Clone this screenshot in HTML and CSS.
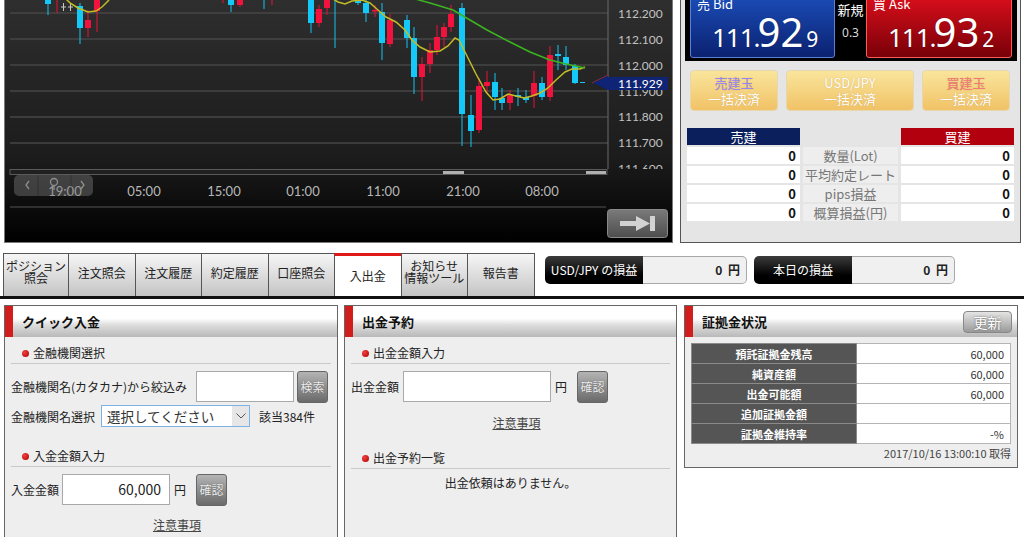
FILE: index.html
```html
<!DOCTYPE html>
<html lang="ja">
<head>
<meta charset="utf-8">
<title>入出金</title>
<link rel="stylesheet" href="styles.css">
</head>
<body>
<div class="top">
  <div class="chart">
    <svg width="667" height="242" viewBox="5 0 667 242" xmlns="http://www.w3.org/2000/svg">
      <defs>
        <linearGradient id="bg" x1="0" y1="0" x2="0" y2="1">
          <stop offset="0" stop-color="#2e2e2e"/>
          <stop offset="0.65" stop-color="#1c1c1c"/>
          <stop offset="1" stop-color="#000"/>
        </linearGradient>
        <linearGradient id="btn" x1="0" y1="0" x2="0" y2="1">
          <stop offset="0" stop-color="#7a7a7a"/>
          <stop offset="1" stop-color="#4e4e4e"/>
        </linearGradient>
        <clipPath id="axclip"><rect x="600" y="0" width="80" height="169"/></clipPath>
      </defs>
      <rect x="5" y="0" width="667" height="242" fill="url(#bg)"/>
      <g class="grid">
        <line x1="10" y1="13" x2="608" y2="13"/>
        <line x1="10" y1="39" x2="608" y2="39"/>
        <line x1="10" y1="65" x2="608" y2="65"/>
        <line x1="10" y1="91" x2="608" y2="91"/>
        <line x1="10" y1="117" x2="608" y2="117"/>
        <line x1="10" y1="143" x2="608" y2="143"/>
      </g>
      <line class="axis" x1="608" y1="0" x2="608" y2="169"/>
      <g class="axlbl" clip-path="url(#axclip)">
        <text x="618" y="18">112.200</text>
        <text x="618" y="44">112.100</text>
        <text x="618" y="70">112.000</text>
        <text x="618" y="96">111.900</text>
        <text x="618" y="121">111.800</text>
        <text x="618" y="147">111.700</text>
        <text x="618" y="173">111.600</text>
      </g>
      <g class="cc">
        <line x1="48" y1="-5" x2="48" y2="15"/><rect x="45" y="-5" width="6" height="9"/>
        <line x1="80" y1="3" x2="80" y2="44"/><rect x="77" y="6" width="6" height="22"/>
        <line x1="231" y1="-5" x2="231" y2="12"/><rect x="228" y="-5" width="6" height="10"/>
        <line x1="264" y1="-5" x2="264" y2="9"/>
        <line x1="311" y1="-5" x2="311" y2="33"/><rect x="308" y="-5" width="6" height="28"/>
        <line x1="335" y1="-5" x2="335" y2="48"/>
        <line x1="358" y1="-5" x2="358" y2="5"/><rect x="355" y="-5" width="6" height="8"/>
        <line x1="366" y1="-5" x2="366" y2="22"/><rect x="363" y="3" width="6" height="10"/>
        <line x1="382" y1="3" x2="382" y2="60"/><rect x="379" y="12" width="6" height="31"/>
        <line x1="407" y1="15" x2="407" y2="48"/><rect x="404" y="20" width="6" height="18"/>
        <line x1="414" y1="27" x2="414" y2="94"/><rect x="411" y="38" width="6" height="39"/>
        <line x1="462" y1="3" x2="462" y2="146"/><rect x="459" y="8" width="6" height="106"/>
        <line x1="471" y1="95" x2="471" y2="147"/><rect x="468" y="115" width="6" height="16"/>
        <line x1="495" y1="73" x2="495" y2="110"/><rect x="492" y="82" width="6" height="15"/>
        <line x1="502" y1="88" x2="502" y2="110"/><rect x="499" y="98" width="6" height="5"/>
        <line x1="518" y1="88" x2="518" y2="106"/><rect x="515" y="95" width="6" height="2"/>
        <line x1="526" y1="90" x2="526" y2="103"/><rect x="523" y="97" width="6" height="3"/>
        <line x1="542" y1="77" x2="542" y2="100"/><rect x="539" y="83" width="6" height="14"/>
        <line x1="558" y1="45" x2="558" y2="70"/><rect x="555" y="54" width="6" height="2"/>
        <line x1="566" y1="46" x2="566" y2="70"/><rect x="563" y="57" width="6" height="8"/>
        <line x1="575" y1="64" x2="575" y2="84"/><rect x="572" y="66" width="6" height="17"/>
        <line x1="580" y1="82.5" x2="585" y2="82.5"/>
      </g>
      <g class="cr">
        <line x1="57" y1="-5" x2="57" y2="13"/><rect x="54" y="-5" width="6" height="5"/>
        <line x1="88" y1="10" x2="88" y2="37"/><rect x="85" y="20" width="6" height="8"/>
        <line x1="97" y1="-5" x2="97" y2="32"/><rect x="94" y="-5" width="6" height="16"/>
        <line x1="223" y1="-5" x2="223" y2="3"/>
        <line x1="240" y1="-5" x2="240" y2="7"/><rect x="237" y="-5" width="6" height="10"/>
        <line x1="272" y1="-5" x2="272" y2="5"/>
        <line x1="319" y1="5" x2="319" y2="27"/><rect x="316" y="9" width="6" height="14"/>
        <line x1="327" y1="-5" x2="327" y2="15"/><rect x="324" y="-5" width="6" height="13"/>
        <line x1="375" y1="5" x2="375" y2="17"/><rect x="372" y="10" width="6" height="1.5"/>
        <line x1="390" y1="14" x2="390" y2="47"/><rect x="387" y="20" width="6" height="24"/>
        <line x1="422" y1="57" x2="422" y2="101"/><rect x="419" y="64" width="6" height="13"/>
        <line x1="430" y1="43" x2="430" y2="73"/><rect x="427" y="50" width="6" height="14"/>
        <line x1="437" y1="25" x2="437" y2="55"/><rect x="434" y="37" width="6" height="13"/>
        <line x1="444" y1="23" x2="444" y2="47"/><rect x="441" y="27" width="6" height="10"/>
        <line x1="451" y1="5" x2="451" y2="32"/><rect x="448" y="14" width="6" height="13"/>
        <line x1="479" y1="78" x2="479" y2="133"/><rect x="476" y="86" width="6" height="44"/>
        <line x1="487" y1="71" x2="487" y2="94"/><rect x="484" y="82" width="6" height="4"/>
        <line x1="510" y1="90" x2="510" y2="110"/><rect x="507" y="95" width="6" height="8"/>
        <line x1="534" y1="71" x2="534" y2="108"/><rect x="531" y="83" width="6" height="13"/>
        <line x1="550" y1="46" x2="550" y2="101"/><rect x="547" y="55" width="6" height="42"/>
      </g>
      <g class="doji">
        <line x1="61" y1="7" x2="66" y2="7"/><line x1="63.5" y1="3" x2="63.5" y2="11"/>
        <line x1="68" y1="7" x2="73" y2="7"/><line x1="70.5" y1="3" x2="70.5" y2="11"/>
      </g>
      <polyline class="ma1" points="64,-3 70,3 78,8 88,12 96,11 102,7 108,1 111,-3"/>
      <polyline class="ma1" points="330,-3 338,2 345,4 352,1 362,0 370,3 378,10 386,17 396,22 405,30 412,40 420,47 430,52 440,51 448,46 455,38 459,40 466,54 476,74 486,92 493,100 500,99 508,94 516,96 524,98 532,96 540,93 548,88 556,80 565,72 572,69 580,69 585,67"/>
      <polyline class="ma2" points="408,-3 430,3 453,10 470,20 487,30 510,42 530,52 550,60 566,64 585,68"/>
      <line x1="592" y1="83" x2="608" y2="75" class="mkline"/>
      <polygon points="593,83 608,76 608,90" class="mk"/>
      <rect x="608" y="77" width="60" height="13" class="mk"/>
      <text x="618" y="88" class="mktxt">111.929</text>
      <rect x="10" y="169.5" width="597" height="5" class="track"/>
      <rect x="443" y="171" width="21" height="3" class="thumb"/>
      <rect x="586" y="171" width="20" height="3" class="thumb"/>
      <g class="tlbl">
        <text x="65" y="196">19:00</text>
        <text x="144" y="196">05:00</text>
        <text x="224" y="196">15:00</text>
        <text x="303" y="196">01:00</text>
        <text x="383" y="196">11:00</text>
        <text x="463" y="196">21:00</text>
        <text x="542" y="196">08:00</text>
      </g>
      <line x1="10" y1="207" x2="606" y2="207" class="sep"/>
      <g class="nav">
        <rect x="14" y="175" width="79" height="21" rx="5" class="navbg"/>
        <line x1="38" y1="175" x2="38" y2="196" class="navdiv"/>
        <line x1="71" y1="175" x2="71" y2="196" class="navdiv"/>
        <polyline points="29,181 26,185 29,189" class="navic"/>
        <circle cx="54" cy="182" r="3.5" class="navic"/>
        <line x1="54" y1="185.5" x2="54" y2="190" class="navic"/>
        <polyline points="81,181 84,185 81,189" class="navic"/>
      </g>
      <rect x="607.5" y="209.5" width="60" height="28" rx="3" fill="url(#btn)" stroke="#8a8a8a"/>
      <rect x="620" y="221" width="18" height="5" class="btnic"/>
      <polygon points="636,216 650,223.5 636,231" class="btnic"/>
      <rect x="650" y="216" width="5" height="15" class="btnic"/>
    </svg>
  </div>
  <div class="side">
    <div class="quote">
      <div class="qbox bid">
        <div class="qlabel">売 Bid</div>
        <div class="qprice"><span class="p1">111.</span><span class="p2">92</span><span class="p3">9</span></div>
      </div>
      <div class="mid">
        <div class="mid1">新規</div>
        <div class="mid2">0.3</div>
      </div>
      <div class="qbox ask">
        <div class="qlabel">買 Ask</div>
        <div class="qprice"><span class="p1">111.</span><span class="p2">93</span><span class="p3">2</span></div>
      </div>
    </div>
    <div class="qbtns">
      <div class="qbtn small"><span class="t-sell">売建玉</span><span>一括決済</span></div>
      <div class="qbtn wide"><span>USD/JPY</span><span>一括決済</span></div>
      <div class="qbtn small"><span class="t-buy">買建玉</span><span>一括決済</span></div>
    </div>
    <div class="pos">
      <div class="ph sell">売建</div><div class="pe"></div><div class="ph buy">買建</div>
      <div class="pv">0</div><div class="pl">数量(Lot)</div><div class="pv">0</div>
      <div class="pv">0</div><div class="pl">平均約定レート</div><div class="pv">0</div>
      <div class="pv">0</div><div class="pl">pips損益</div><div class="pv">0</div>
      <div class="pv">0</div><div class="pl">概算損益(円)</div><div class="pv">0</div>
    </div>
  </div>
</div>

<div class="tabbar">
  <div class="tab first two">ポジション<br>照会</div>
  <div class="tab">注文照会</div>
  <div class="tab">注文履歴</div>
  <div class="tab">約定履歴</div>
  <div class="tab">口座照会</div>
  <div class="tab active">入出金</div>
  <div class="tab two">お知らせ<br>情報ツール</div>
  <div class="tab">報告書</div>
  <div class="pnl p-a">
    <div class="pnl-l">USD/JPY の損益</div>
    <div class="pnl-v">0 円</div>
  </div>
  <div class="pnl p-b">
    <div class="pnl-l">本日の損益</div>
    <div class="pnl-v">0 円</div>
  </div>
</div>

<div class="panels">
  <div class="panel p1">
    <div class="phead"><span class="pbar"></span><span class="ptitle">クイック入金</span></div>
    <div class="sec"><span class="dot"></span>金融機関選択</div>
    <div class="row r1">
      <span class="lbl w-kana">金融機関名(カタカナ)から絞込み</span>
      <span class="inp i-kana"></span>
      <span class="gbtn">検索</span>
    </div>
    <div class="row r2">
      <span class="lbl w-sel">金融機関名選択</span>
      <span class="sel"><span class="seltxt">選択してください</span><span class="selarr"><svg width="10" height="6" viewBox="0 0 10 6"><polyline points="0.5,0.5 5,5 9.5,0.5" fill="none" stroke="#555" stroke-width="1"/></svg></span></span>
      <span class="cnt">該当384件</span>
    </div>
    <div class="sec sec2"><span class="dot"></span>入金金額入力</div>
    <div class="row r3">
      <span class="lbl">入金金額</span>
      <span class="inp i-amt">60,000</span>
      <span class="yen">円</span>
      <span class="gbtn kb">確認</span>
    </div>
    <div class="note"><span class="link">注意事項</span></div>
  </div>

  <div class="panel p2">
    <div class="phead"><span class="pbar"></span><span class="ptitle">出金予約</span></div>
    <div class="sec"><span class="dot"></span>出金金額入力</div>
    <div class="row r1">
      <span class="lbl">出金金額</span>
      <span class="inp i-out"></span>
      <span class="yen">円</span>
      <span class="gbtn kb2">確認</span>
    </div>
    <div class="note n2"><span class="link">注意事項</span></div>
    <div class="sec sec3"><span class="dot"></span>出金予約一覧</div>
    <div class="msg">出金依頼はありません。</div>
  </div>

  <div class="panel p3">
    <div class="phead"><span class="pbar"></span><span class="ptitle">証拠金状況</span><span class="upd">更新</span></div>
    <table class="mtable">
      <tr><th>預託証拠金残高</th><td>60,000</td></tr>
      <tr><th>純資産額</th><td>60,000</td></tr>
      <tr><th>出金可能額</th><td>60,000</td></tr>
      <tr><th>追加証拠金額</th><td></td></tr>
      <tr><th>証拠金維持率</th><td>-%</td></tr>
    </table>
    <div class="stamp">2017/10/16 13:00:10 取得</div>
  </div>
</div>
</body>
</html>
```

FILE: styles.css
```css
html, body {
  margin: 0;
  padding: 0;
  width: 1024px;
  height: 537px;
  overflow: hidden;
  background: #fff;
  font-family: "Noto Sans CJK JP", "Noto Sans", sans-serif;
  font-size: 12px;
  color: #222;
}

/* ---------- top area ---------- */
.top {
  display: flex;
  height: 243px;
}

.chart {
  margin-left: 4px;
  width: 669px;
  height: 243px;
  box-sizing: border-box;
  border: 1px solid #7a7a7a;
  border-top: none;
  background: #000;
}

.chart svg { display: block; }

.grid line { stroke: #464646; stroke-width: 1.5; }
.axis { stroke: #6a6a6a; stroke-width: 1; }
.axlbl text { font-family: Lato, "Noto Sans", sans-serif; font-size: 12px; fill: #c2c2c2; }
.tlbl text { font-family: Lato, "Noto Sans", sans-serif; font-size: 13px; fill: #b8b8b8; text-anchor: middle; }
.cc line { stroke: #14c4f4; stroke-width: 1; }
.cc rect { fill: #14c8f8; }
.cr line { stroke: #e8103a; stroke-width: 1; }
.cr rect { fill: #f2123e; }
.doji line { stroke: #c8c8c8; stroke-width: 1; }
.ma1 { fill: none; stroke: #c2bc26; stroke-width: 1.5; }
.ma2 { fill: none; stroke: #3cb422; stroke-width: 1.5; }
.mk { fill: #0f2474; }
.mkline { stroke: #8a2a4a; stroke-width: 1; }
.mktxt { font-family: Lato, "Noto Sans", sans-serif; font-size: 12px; fill: #fff; }
.track { fill: #202020; stroke: #5a5a5a; stroke-width: 1; }
.thumb { fill: #b0b0b0; }
.sep { stroke: #3c3c3c; stroke-width: 1.5; }
.navbg { fill: rgba(120, 120, 120, 0.45); }
.navdiv { stroke: rgba(30, 30, 30, 0.45); stroke-width: 1; }
.navic { fill: none; stroke: #8e8e8e; stroke-width: 1.3; }
.btnic { fill: #d2d2d2; }

/* ---------- side panel ---------- */
.side {
  margin-left: 7px;
  width: 341px;
  height: 243px;
  box-sizing: border-box;
  border: 1px solid #555;
  border-top: none;
  background: #e5e5e5;
}

.quote {
  display: flex;
  margin: -6px 3px 0 4px;
  height: 67px;
  padding: 0 5px 3px;
  box-sizing: border-box;
  background: #000;
}

.qbox {
  box-sizing: border-box;
  height: 64px;
  border-radius: 0 0 3px 3px;
  color: #fff;
}

.bid {
  width: 145px;
  border: 1px solid #5b80d8;
  background: linear-gradient(#1b4db8, #0b2170);
}

.ask {
  width: 146px;
  border: 1px solid #ff5a5a;
  background: linear-gradient(#dc0f1c, #780008);
}

.qlabel {
  padding: 1px 0 0 6px;
  height: 15px;
  line-height: 15px;
  font-size: 13px;
}

.qprice {
  margin-top: 1px;
  padding-left: 17px;
  height: 38px;
  line-height: 38px;
  font-family: "Noto Sans", sans-serif;
  font-size: 38px;
  white-space: nowrap;
  text-shadow: 0 0 1px rgba(0, 0, 0, 0.4);
}

.qprice span { line-height: 1; }
.qprice .p1 { font-size: 26px; letter-spacing: -1px; }
.qprice .p2 { font-size: 40px; margin-left: -2px; }
.qprice .p3 { font-size: 21px; margin-left: 3px; }

.mid {
  flex: 1;
  text-align: center;
  color: #fff;
}

.mid1 { padding-top: 8px; line-height: 16px; font-size: 13px; }
.mid2 { margin-top: 7px; line-height: 16px; font-size: 12px; color: #d8d8d8; font-family: "Noto Sans", sans-serif; }

.qbtns {
  display: flex;
  gap: 8px;
  margin: 9px 0 0 9px;
}

.qbtn {
  box-sizing: border-box;
  height: 41px;
  border: 1px solid #e6d7b0;
  border-radius: 4px;
  background: linear-gradient(#f9e59c, #f1c266);
  display: flex;
  flex-direction: column;
  align-items: center;
  justify-content: center;
  color: #fff;
  font-size: 13px;
  line-height: 16px;
  text-shadow: 0 0 1px rgba(160, 120, 40, 0.5);
}

.qbtn.small { width: 88px; }
.qbtn.wide { width: 128px; }
.t-sell { color: #9a86f2; }
.t-buy { color: #f07a7a; }

.pos {
  display: grid;
  grid-template-columns: 113px 95px 113px;
  grid-auto-rows: 17px;
  column-gap: 3px;
  row-gap: 2px;
  margin: 17px 0 0 6px;
  font-size: 13px;
  line-height: 17px;
}

.ph { color: #fff; text-align: center; }
.ph.sell { background: #0b1f5c; }
.ph.buy { background: #b3000e; }
.pv { background: #fff; text-align: right; padding-right: 4px; font-weight: bold; color: #111; }
.pl { background: #eeeeee; text-align: center; color: #777; white-space: nowrap; }

/* ---------- tab bar ---------- */
.tabbar {
  display: flex;
  align-items: flex-end;
  height: 56px;
  box-sizing: border-box;
  padding-left: 3px;
  border-bottom: 3px solid #111;
}

.tab {
  box-sizing: border-box;
  width: 67.5px;
  height: 43px;
  margin-left: -1px;
  border: 1px solid #555;
  border-bottom: none;
  background: linear-gradient(#f6f6f6, #c4c4c4);
  display: flex;
  align-items: center;
  justify-content: center;
  text-align: center;
  padding-bottom: 3px;
  font-size: 12px;
  line-height: 12.5px;
  color: #222;
  white-space: nowrap;
}

.tab.first { width: 66px; margin-left: 0; }
.tab.two { padding-bottom: 6px; }
.tab.active {
  background: #fff;
  border-top: 3px solid #e01818;
  padding-bottom: 0;
}

.pnl {
  display: flex;
  align-self: flex-start;
  margin-top: 13px;
  height: 28px;
}

.p-a { margin-left: 10.5px; }
.p-b { margin-left: 7px; }

.pnl-l {
  width: 98px;
  box-sizing: border-box;
  background: linear-gradient(#3c3c3c, #000 70%);
  border-radius: 5px 0 0 5px;
  color: #fff;
  font-size: 12px;
  line-height: 28px;
  text-align: center;
  white-space: nowrap;
}

.pnl-v {
  box-sizing: border-box;
  background: #f0f0f0;
  border: 1px solid #a8a8a8;
  border-left: none;
  border-radius: 0 5px 5px 0;
  font-weight: bold;
  font-size: 12px;
  line-height: 26px;
  text-align: right;
  padding-right: 6px;
  word-spacing: 3px;
}

.p-a .pnl-v { width: 104px; }
.p-b .pnl-v { width: 103px; }

/* ---------- bottom panels ---------- */
.panels {
  display: flex;
  align-items: flex-start;
  margin-top: 6px;
}

.panel {
  box-sizing: border-box;
  border: 1px solid #666;
  background: #eeeeee;
}

.p1 { margin-left: 4px; width: 334px; height: 240px; }
.p2 { margin-left: 6px; width: 333px; height: 240px; }
.p3 { margin-left: 7px; width: 334px; height: 163px; }

.phead {
  display: flex;
  align-items: center;
  height: 31px;
  background: linear-gradient(#ffffff 0%, #ffffff 40%, #dcdcdc 62%, #b9b9b9 100%);
}

.pbar {
  align-self: stretch;
  width: 8px;
  background: #d21d1d;
}

.ptitle {
  margin-left: 9px;
  font-size: 13px;
  font-weight: bold;
  color: #111;
}

.upd {
  margin-left: auto;
  margin-right: 5px;
  width: 49px;
  height: 22px;
  box-sizing: border-box;
  border: 1px solid #888;
  border-radius: 4px;
  background: linear-gradient(#e4e4e4, #9a9a9a);
  color: #fff;
  font-size: 14px;
  line-height: 20px;
  text-align: center;
  text-shadow: 0 0 2px #555;
}

.sec {
  margin: 0 6px;
  padding: 6px 0 0 11px;
  line-height: 20px;
  border-bottom: 1px solid #c9c9c9;
  display: flex;
  align-items: center;
  font-size: 12px;
  color: #222;
}

.sec2 { margin-top: 14px; padding-top: 5px; }
.sec3 { margin-top: 12px; padding-top: 5px; }

.dot {
  width: 7px;
  height: 7px;
  border-radius: 50%;
  background: radial-gradient(circle at 35% 35%, #f04040, #b00000);
  margin-right: 4px;
}

.row {
  display: flex;
  align-items: center;
  margin-left: 6px;
}

.r1 { margin-top: 6px; height: 33px; }
.r2 { margin-top: 2px; height: 22px; }
.r3 { margin-top: 7px; height: 31px; }

.lbl { white-space: nowrap; font-size: 12px; color: #222; }
.w-kana { width: 182px; }
.w-sel { width: 87px; }

.inp {
  box-sizing: border-box;
  height: 31px;
  background: #fff;
  border: 1px solid #a9a9a9;
  margin-left: 3px;
  font-size: 14px;
  line-height: 29px;
  text-align: right;
  padding-right: 8px;
  color: #222;
}

.i-kana { width: 98px; }
.i-amt { width: 108px; margin-left: 3px; }
.i-out { width: 148px; margin-left: 4px; }

.gbtn {
  box-sizing: border-box;
  width: 31px;
  height: 32px;
  margin-left: 3px;
  border: 1px solid #666;
  border-radius: 3px;
  background: linear-gradient(#b4b4b4, #6a6a6a);
  color: #eee;
  font-size: 12px;
  line-height: 30px;
  text-align: center;
  text-shadow: 0 0 1px #444;
}

.kb { margin-left: 10px; }
.kb2 { margin-left: 10px; }

.yen { margin-left: 4px; font-size: 12px; }

.sel {
  display: flex;
  box-sizing: border-box;
  width: 149px;
  height: 22px;
  margin-left: 3px;
  background: #fff;
  border: 1px solid #7db2e8;
}

.seltxt {
  flex: 1;
  padding-left: 5px;
  font-size: 13.5px;
  line-height: 20px;
  color: #333;
  white-space: nowrap;
  overflow: hidden;
}

.selarr {
  width: 17px;
  background: #e6e6e6;
  display: flex;
  align-items: center;
  justify-content: center;
}

.selarr svg { display: block; }

.cnt { margin-left: 9px; font-size: 12px; }

.note {
  margin-top: 12px;
  padding-left: 12px;
  line-height: 16px;
  text-align: center;
}

.link {
  color: #444;
  text-decoration: underline;
  font-size: 12px;
}

.msg {
  margin-top: 6px;
  line-height: 16px;
  text-align: center;
  font-size: 12px;
  color: #222;
}

.mtable {
  margin: 6px 6px 0;
  width: 320px;
  border-collapse: collapse;
  font-size: 11px;
}

.mtable th, .mtable td {
  height: 19px;
  padding: 0;
  border: 1px solid #b5b5b5;
}

.mtable th {
  width: 164px;
  background: #555;
  color: #fff;
  font-weight: bold;
  text-align: center;
  border-color: #8a8a8a;
}

.mtable td {
  background: #fff;
  color: #333;
  text-align: right;
  padding-right: 6px;
}

.stamp {
  margin-top: 1px;
  padding-right: 6px;
  line-height: 16px;
  text-align: right;
  font-size: 11px;
  color: #444;
}
```
